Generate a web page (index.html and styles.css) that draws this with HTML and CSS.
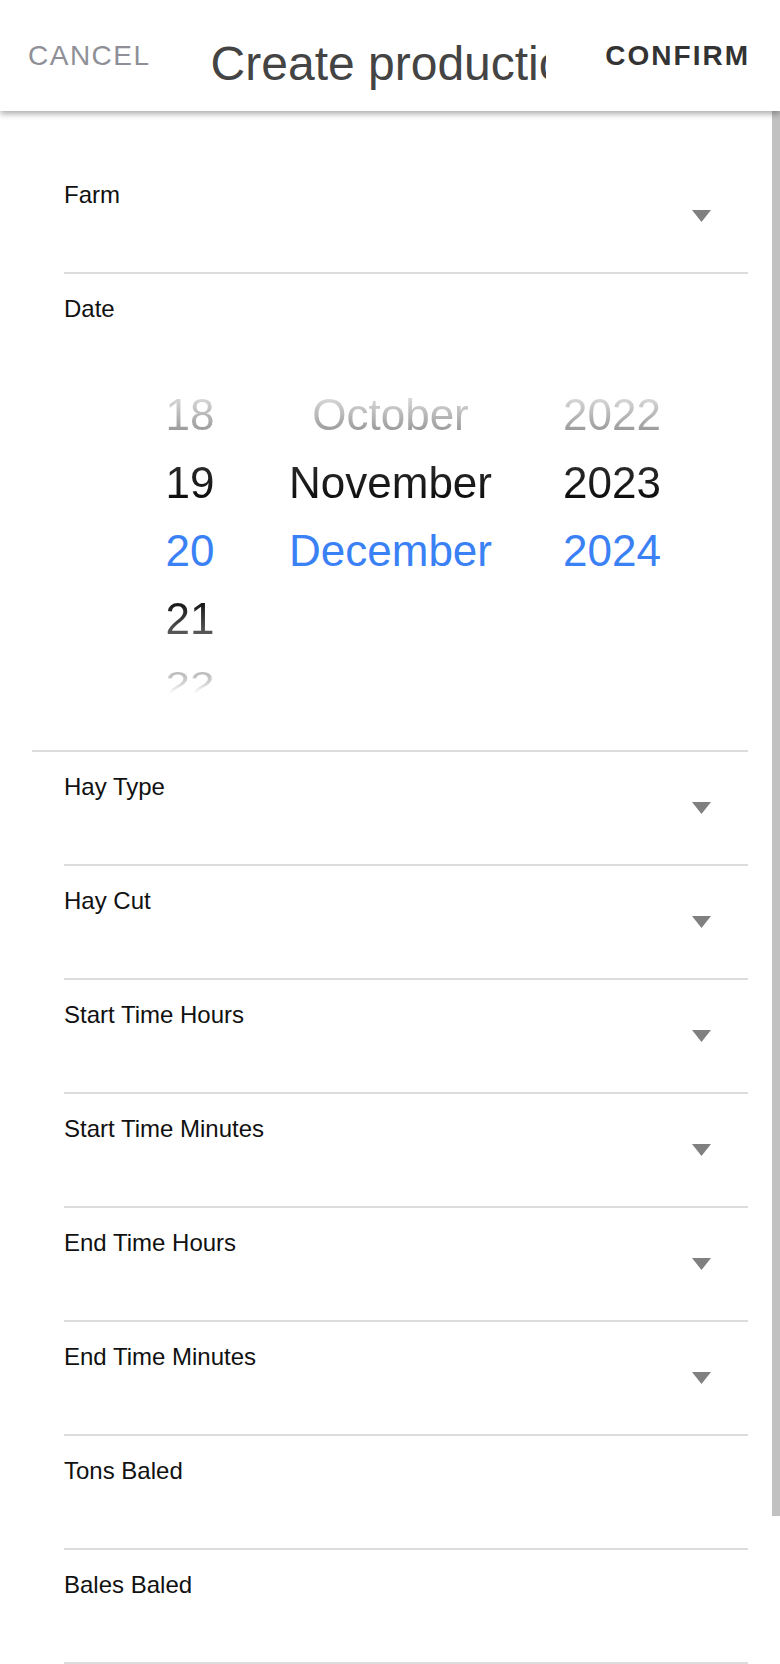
FILE: index.html
```html
<!DOCTYPE html>
<html lang="en">
<head>
<meta charset="utf-8">
<title>Create production</title>
<link rel="stylesheet" href="styles.css">
</head>
<body>
<div class="screen">
  <header class="topbar">
    <button class="btn btn-cancel" type="button">CANCEL</button>
    <h1 class="title">Create production</h1>
    <button class="btn btn-confirm" type="button">CONFIRM</button>
  </header>

  <main class="form">
    <div class="field">
      <div class="label">Farm</div>
      <div class="control"><svg class="caret" width="19" height="12" viewBox="0 0 19 12"><polygon points="0,0 19,0 9.5,12" fill="#808080"/></svg></div>
    </div>

    <div class="field field-date">
      <div class="label">Date</div>
      <div class="picker">
        <div class="col col-day">
          <div class="item far-top">18</div>
          <div class="item near-top">19</div>
          <div class="item selected">20</div>
          <div class="item near-bottom">21</div>
          <div class="item far-bottom"><span>22</span></div>
        </div>
        <div class="col col-month">
          <div class="item far-top">October</div>
          <div class="item near-top">November</div>
          <div class="item selected">December</div>
        </div>
        <div class="col col-year">
          <div class="item far-top">2022</div>
          <div class="item near-top">2023</div>
          <div class="item selected">2024</div>
        </div>
      </div>
    </div>

    <div class="field">
      <div class="label">Hay Type</div>
      <div class="control"><svg class="caret" width="19" height="12" viewBox="0 0 19 12"><polygon points="0,0 19,0 9.5,12" fill="#808080"/></svg></div>
    </div>
    <div class="field">
      <div class="label">Hay Cut</div>
      <div class="control"><svg class="caret" width="19" height="12" viewBox="0 0 19 12"><polygon points="0,0 19,0 9.5,12" fill="#808080"/></svg></div>
    </div>
    <div class="field">
      <div class="label">Start Time Hours</div>
      <div class="control"><svg class="caret" width="19" height="12" viewBox="0 0 19 12"><polygon points="0,0 19,0 9.5,12" fill="#808080"/></svg></div>
    </div>
    <div class="field">
      <div class="label">Start Time Minutes</div>
      <div class="control"><svg class="caret" width="19" height="12" viewBox="0 0 19 12"><polygon points="0,0 19,0 9.5,12" fill="#808080"/></svg></div>
    </div>
    <div class="field">
      <div class="label">End Time Hours</div>
      <div class="control"><svg class="caret" width="19" height="12" viewBox="0 0 19 12"><polygon points="0,0 19,0 9.5,12" fill="#808080"/></svg></div>
    </div>
    <div class="field">
      <div class="label">End Time Minutes</div>
      <div class="control"><svg class="caret" width="19" height="12" viewBox="0 0 19 12"><polygon points="0,0 19,0 9.5,12" fill="#808080"/></svg></div>
    </div>
    <div class="field">
      <div class="label">Tons Baled</div>
    </div>
    <div class="field">
      <div class="label">Bales Baled</div>
    </div>
  </main>

  <div class="scrollbar"></div>
</div>
</body>
</html>
```

FILE: styles.css
```css
html, body {
  margin: 0;
  padding: 0;
  height: 1664px;
  overflow: hidden;
  background: #ffffff;
}

body {
  font-family: "Liberation Sans", Arial, Helvetica, sans-serif;
  color: #111111;
}

.screen {
  position: relative;
  width: 780px;
  height: 1664px;
  overflow: hidden;
}

.topbar {
  position: relative;
  z-index: 2;
  height: 111px;
  box-sizing: border-box;
  background: #ffffff;
  box-shadow: 0 3px 6px rgba(0, 0, 0, 0.32);
  display: flex;
  align-items: flex-start;
  padding: 0 30px 0 28px;
}

.btn {
  border: 0;
  background: none;
  padding: 0;
  margin: 40px 0 0 0;
  font-family: inherit;
  font-size: 28px;
  line-height: 32px;
  letter-spacing: 1.5px;
  white-space: nowrap;
}

.btn-cancel {
  color: #8f9097;
}

.btn-confirm {
  margin-left: auto;
  color: #333333;
  font-weight: bold;
  letter-spacing: 2px;
}

.title {
  margin: 36px 0 0 60px;
  width: 335px;
  overflow: hidden;
  white-space: nowrap;
  font-size: 48px;
  line-height: 56px;
  font-weight: normal;
  color: #444444;
}

.form {
  padding: 49px 32px 0 64px;
}

.field {
  height: 114px;
  box-sizing: border-box;
  padding-top: 21px;
  border-bottom: 2px solid #dcdcdc;
}

.label {
  font-size: 24px;
  line-height: 28px;
  color: #111111;
}

.control {
  display: flex;
  justify-content: flex-end;
  padding-top: 1px;
  padding-right: 37px;
}

.caret {
  display: block;
}

.field-date {
  height: 478px;
  margin-left: -32px;
  padding-left: 32px;
}

.picker {
  display: flex;
  margin: 58px 0 0 76px;
  font-size: 44px;
  line-height: 68px;
}

.col {
  display: flex;
  flex-direction: column;
  text-align: center;
}

.col-day {
  width: 100px;
}

.col-month {
  width: 241px;
  margin-left: 30px;
}

.col-year {
  width: 130px;
  margin-left: 36px;
}

.item {
  height: 68px;
  white-space: nowrap;
}

.far-top {
  background: linear-gradient(to bottom, #d8d8d8 25%, #9c9c9c 72%);
  -webkit-background-clip: text;
  background-clip: text;
  color: transparent;
}

.near-top {
  background: linear-gradient(to bottom, #2a2a2a 25%, #0e0e0e 72%);
  -webkit-background-clip: text;
  background-clip: text;
  color: transparent;
}

.selected {
  color: #3a81f6;
}

.near-bottom {
  background: linear-gradient(to bottom, #141414 25%, #5a5a5a 72%);
  -webkit-background-clip: text;
  background-clip: text;
  color: transparent;
}

.far-bottom span {
  display: inline-block;
  transform: scaleY(0.8);
  transform-origin: 50% 26%;
  background: linear-gradient(to bottom, #b8b8b8 28%, #d4d4d4 50%, #ffffff 68%);
  -webkit-background-clip: text;
  background-clip: text;
  color: transparent;
}

.scrollbar {
  position: absolute;
  top: 111px;
  left: 772px;
  width: 8px;
  height: 1405px;
  background: #c1c1c1;
  z-index: 1;
}
```
